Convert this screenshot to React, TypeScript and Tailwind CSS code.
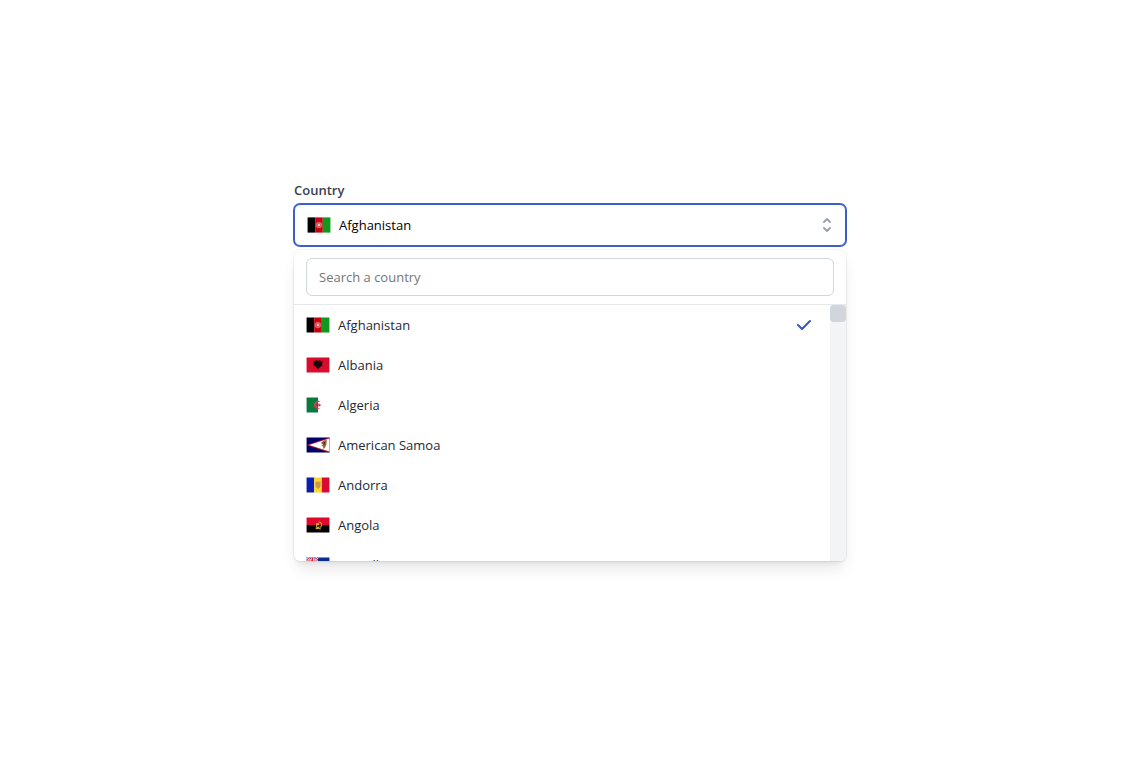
import { useState } from "react";

const COUNTRIES = [
  "Afghanistan", "Albania", "Algeria", "American Samoa", "Andorra", "Angola", "Anguilla",
];

function FlagArt({ country }: { country: string }) {
  switch (country) {
    case "Afghanistan":
      return (
        <>
          <path fill="#000" d="M0 0h8v16H0z" />
          <path fill="#c8000e" d="M8 0h8v16H8z" />
          <path fill="#0f9a1c" d="M16 0h8v16h-8z" />
          <circle cx="12" cy="8" r="3" fill="#e0757a" fillOpacity=".75" stroke="#e0757a" strokeOpacity=".6" strokeWidth="1" />
          <path fill="#f3c4c5" d="M11 7.2l1-.9 1 .9V9h-2z" />
        </>
      );
    case "Albania":
      return (
        <>
          <path fill="#d80c2c" d="M0 0h24v16H0z" />
          <path
            fill="#1a0508"
            d="M12 4.2l-1.2-1.4-1.4.6.7.9-2.7-.8.1 5 1.3 1 1.4.3.2 1.3.8.1.8 2.1.8-2.1.8-.1.2-1.3 1.4-.3 1.3-1 .1-5-2.7.8.7-.9-1.4-.6z"
          />
        </>
      );
    case "Algeria":
      return (
        <>
          <path fill="#fff" d="M0 0h24v16H0z" />
          <path fill="#077a3d" d="M0 0h12v16H0z" />
          <path fill="#d8385a" d="M14.8 4.8A4.2 4.2 0 1 0 14.8 11.2A3.4 3.4 0 1 1 14.8 4.8z" />
          <path fill="#d21034" d="M16 8l-2.1-.6-1.2-1.7v1.9L10.8 8l1.9.5v1.9l1.2-1.7z" />
        </>
      );
    case "American Samoa":
      return (
        <>
          <path fill="#000066" d="M0 0h24v16H0z" />
          <path fill="#c8102e" d="M24 0v16L0 8z" />
          <path fill="#fff" d="M24 1.2v13.6L2.6 8z" />
          <path fill="#9b5b2c" d="M15 5.8l3.2-2.4 3-.6-.5 4.6-1.2 3.2-2.2 1.4.2-2.6-2-.6 1.7-1.3z" />
          <path fill="#e9b53f" d="M17 10.8l3 .3-2.6 1.3zM14.2 6.6l2.4-.4-.8 1.1z" />
          <path fill="#3c2a20" d="M18.2 4.2l1.2 1.8-.9 1.9-.4-1.6z" />
        </>
      );
    case "Andorra":
      return (
        <>
          <path fill="#0a1fb0" d="M0 0h8v16H0z" />
          <path fill="#ffd52e" d="M8 0h8v16H8z" />
          <path fill="#d80c32" d="M16 0h8v16h-8z" />
          <path fill="#c9a04a" stroke="#c9964a" strokeWidth=".6" d="M9.7 4.8h4.6v4.6c0 1-1 1.7-2.3 2.2-1.3-.5-2.3-1.2-2.3-2.2z" />
          <path fill="#d98a4c" d="M10.2 5.8H12V8h-1.8zM12 8h1.8v1.8H12z" />
        </>
      );
    case "Angola":
      return (
        <>
          <path fill="#e0082c" d="M0 0h24v8H0z" />
          <path fill="#000" d="M0 8h24v8H0z" />
          <path fill="none" stroke="#d8b028" strokeWidth="1.1" d="M12.6 4.6a3.3 3.3 0 0 1 1.9 6M9.6 10.8l5.4 1.4M9.6 12.2l4-2.4M10.6 6v4" />
          <path fill="#f3cf20" d="M12 5.4l.5 1.2h1.2l-.9.8.4 1.2-1.2-.7-1.1.7.4-1.2-.9-.8h1.2z" />
        </>
      );
    default:
      return (
        <>
          <path fill="#0a2a9c" d="M0 0h24v16H0z" />
          <path stroke="#fff" strokeWidth="2" d="M0 0l12 8M12 0L0 8" />
          <path stroke="#d8202f" strokeWidth="1" d="M0 0l12 8M12 0L0 8" />
          <path stroke="#fff" strokeWidth="3" d="M6 0v8M0 4h12" />
          <path stroke="#d8202f" strokeWidth="1.6" d="M6 0v8M0 4h12" />
        </>
      );
  }
}

function Flag({ country }: { country: string }) {
  return (
    <svg viewBox="-.6 -.4 25.2 16.8" className="h-4 w-6 shrink-0" aria-hidden="true">
      <FlagArt country={country} />
    </svg>
  );
}

export default function App() {
  const [open, setOpen] = useState(true);
  const [query, setQuery] = useState("");
  const [selected, setSelected] = useState("Afghanistan");

  const matches = COUNTRIES.filter((c) => c.toLowerCase().startsWith(query.toLowerCase()));

  return (
    <main className="min-h-screen bg-white pt-[180px] pr-1 pb-12 font-['Open_Sans','Noto_Sans',sans-serif] text-[13px] leading-5">
      <div className="mx-auto w-full max-w-[552px]">
        <label id="country-label" htmlFor="country" className="block font-semibold text-[#374151]">
          Country
        </label>

        <button
          id="country"
          type="button"
          aria-haspopup="listbox"
          aria-expanded={open}
          onClick={() => setOpen(!open)}
          className="mt-1 flex h-[42px] w-full items-center gap-2 rounded-md border border-[#3b5fcc] bg-white px-3 text-left text-black ring-1 ring-[#3b5fcc] outline-none"
        >
          <Flag country={selected} />
          <span className="flex-1 truncate">{selected}</span>
          <svg viewBox="0 0 20 20" className="size-5 -mr-1 text-[#9ca3af]" fill="currentColor" aria-hidden="true">
            <path
              fillRule="evenodd"
              clipRule="evenodd"
              d="M10 3a1 1 0 01.707.293l3 3a1 1 0 01-1.414 1.414L10 5.414 7.707 7.707a1 1 0 01-1.414-1.414l3-3A1 1 0 0110 3zm-3.707 9.293a1 1 0 011.414 0L10 14.586l2.293-2.293a1 1 0 011.414 1.414l-3 3a1 1 0 01-1.414 0l-3-3a1 1 0 010-1.414z"
            />
          </svg>
        </button>

        {open && (
          <div className="mt-1 overflow-hidden rounded-md bg-white shadow-lg ring-1 ring-black/5">
            <div className="border-b border-gray-200 px-3 py-2">
              <input
                type="search"
                aria-label="Search a country"
                placeholder="Search a country"
                value={query}
                onChange={(e) => setQuery(e.target.value)}
                className="block h-[38px] w-full rounded-md border border-gray-300 px-3 text-gray-900 outline-none placeholder:text-[#757575]"
              />
            </div>

            <div className="flex h-64">
              <ul role="listbox" aria-labelledby="country-label" className="flex-1 overflow-y-auto">
                {matches.map((c) => (
                  <li
                    key={c}
                    role="option"
                    aria-selected={c === selected}
                    onClick={() => setSelected(c)}
                    className="flex h-10 cursor-default items-center gap-2 pr-4 pl-3 text-[#1f2937]"
                  >
                    <Flag country={c} />
                    <span className="flex-1 truncate">{c}</span>
                    {c === selected && (
                      <svg viewBox="0 0 20 20" className="size-5 text-[#3558b8]" fill="currentColor" aria-hidden="true">
                        <path
                          fillRule="evenodd"
                          clipRule="evenodd"
                          d="M16.707 5.293a1 1 0 010 1.414l-8 8a1 1 0 01-1.414 0l-4-4a1 1 0 011.414-1.414L8 12.586l7.293-7.293a1 1 0 011.414 0z"
                        />
                      </svg>
                    )}
                  </li>
                ))}
              </ul>
              <div className="w-4 bg-gray-100" aria-hidden="true">
                <div className="h-[17px] rounded bg-gray-300" />
              </div>
            </div>
          </div>
        )}
      </div>
    </main>
  );
}
